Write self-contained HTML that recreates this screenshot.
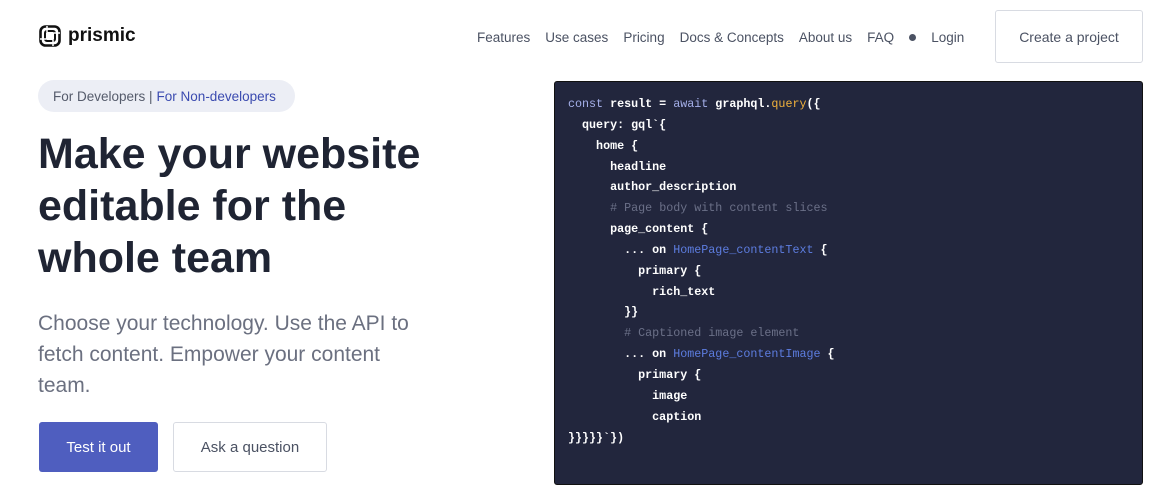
<!DOCTYPE html>
<html><head><meta charset="utf-8"><style>
*{margin:0;padding:0;box-sizing:border-box}
body{width:1160px;height:500px;overflow:hidden;background:#fff;font-family:"Liberation Sans",sans-serif;color:#1f2433;position:relative}
.logo{position:absolute;left:38px;top:24px;display:flex;align-items:center;gap:6px;font-weight:bold;font-size:19px;color:#111}
nav{position:absolute;top:30px;left:477px;font-size:13.5px;color:#4b5263;display:flex;gap:15px;align-items:center}
.dot{width:7px;height:7px;border-radius:50%;background:#4b5263;display:inline-block}
.cp{position:absolute;left:995px;top:10px;width:148px;height:53px;border:1px solid #d8dbe2;border-radius:3px;font-size:14px;color:#4b5263;display:flex;align-items:center;justify-content:center}
.pill{position:absolute;left:38px;top:80px;width:257px;height:32px;border-radius:16px;background:#eceef5;font-size:13.5px;color:#555b6b;display:flex;align-items:center;padding-left:15px}
.pill b{font-weight:normal;color:#3b4bb0;margin-left:4px}
h1{position:absolute;left:38px;top:128px;font-size:43px;line-height:52px;font-weight:bold;color:#1f2433;width:420px}
p.sub{position:absolute;left:38px;top:308px;font-size:21px;line-height:31px;color:#6b7080;width:400px}
.b1{position:absolute;left:39px;top:422px;width:119px;height:50px;background:#4f5ebf;color:#fff;border-radius:3px;font-size:15px;display:flex;align-items:center;justify-content:center}
.b2{position:absolute;left:173px;top:422px;width:154px;height:50px;border:1px solid #d8dbe2;color:#4b5263;border-radius:3px;font-size:15px;display:flex;align-items:center;justify-content:center}
.code{position:absolute;left:554px;top:81px;width:589px;height:404px;background:#22263d;border-radius:3px;border:1px solid #111}
pre{position:absolute;left:13px;top:12px;font-family:"Liberation Mono",monospace;font-size:11.7px;line-height:20.85px;color:#fff;font-weight:bold}
.k{color:#a5b0ea;font-weight:normal}.f{color:#f2b23c;font-weight:normal}.c{color:#6b7088;font-weight:normal}.t{color:#5d7de0;font-weight:normal}
</style></head><body>
<div class="logo"><svg width="24" height="24" viewBox="0 0 24 24" fill="none" stroke="#111" stroke-width="2.6"><rect x="2.5" y="2.5" width="19" height="19" rx="5"/><rect x="7" y="7" width="10" height="10" rx="2" stroke-width="2"/><path d="M9 2v6M15 22v-6M2 15h6M22 9h-6" stroke="#fff" stroke-width="1.5"/></svg>prismic</div>
<nav><span>Features</span><span>Use cases</span><span>Pricing</span><span>Docs &amp; Concepts</span><span>About us</span><span>FAQ</span><span class="dot"></span><span>Login</span></nav>
<div class="cp">Create a project</div>
<div class="pill">For Developers |<b>For Non-developers</b></div>
<h1>Make your website editable for the whole team</h1>
<p class="sub">Choose your technology. Use the API to fetch content. Empower your content team.</p>
<div class="b1">Test it out</div>
<div class="b2">Ask a question</div>
<div class="code"><pre><span class="k">const</span> result = <span class="k">await</span> graphql.<span class="f">query</span>({
  query: gql`{
    home {
      headline
      author_description
      <span class="c"># Page body with content slices</span>
      page_content {
        ... on <span class="t">HomePage_contentText</span> {
          primary {
            rich_text
        }}
        <span class="c"># Captioned image element</span>
        ... on <span class="t">HomePage_contentImage</span> {
          primary {
            image
            caption
}}}}}`})</pre></div>
</body></html>
